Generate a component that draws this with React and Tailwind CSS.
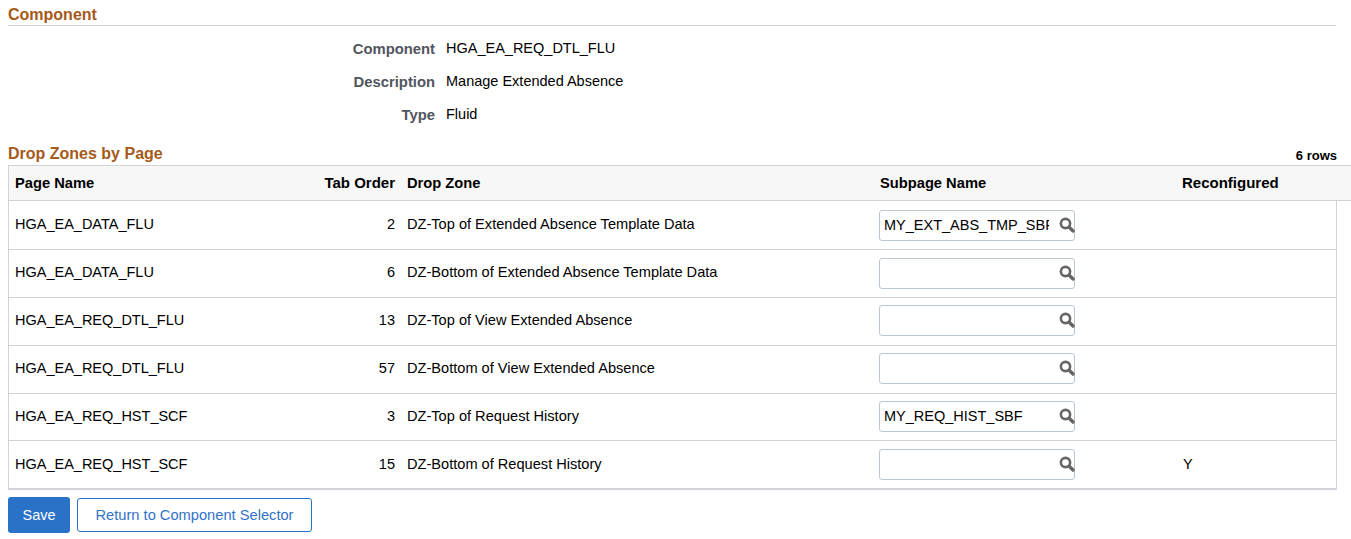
const rows = [
  { page: "HGA_EA_DATA_FLU", tab: 2, zone: "DZ-Top of Extended Absence Template Data", sub: "MY_EXT_ABS_TMP_SBF", cls: "h-[49px] border-b", top: "mt-[9px]" },
  { page: "HGA_EA_DATA_FLU", tab: 6, zone: "DZ-Bottom of Extended Absence Template Data", sub: "", cls: "h-[48px] border-b pb-[2px]", top: "mt-[8px]" },
  { page: "HGA_EA_REQ_DTL_FLU", tab: 13, zone: "DZ-Top of View Extended Absence", sub: "", cls: "h-[48px] border-b pb-[2px]", top: "mt-[7px]" },
  { page: "HGA_EA_REQ_DTL_FLU", tab: 57, zone: "DZ-Bottom of View Extended Absence", sub: "", cls: "h-[48px] border-b pb-[2px]", top: "mt-[7px]" },
  { page: "HGA_EA_REQ_HST_SCF", tab: 3, zone: "DZ-Top of Request History", sub: "MY_REQ_HIST_SBF", cls: "h-[47px] border-b", top: "mt-[7px]" },
  { page: "HGA_EA_REQ_HST_SCF", tab: 15, zone: "DZ-Bottom of Request History", sub: "", re: "Y", cls: "h-[49px] border-b-2", top: "mt-[8px]" },
];

const info = [
  ["Component", "HGA_EA_REQ_DTL_FLU"],
  ["Description", "Manage Extended Absence"],
  ["Type", "Fluid"],
];

function SearchIcon() {
  return (
    <svg width="16" height="16" viewBox="0 0 16 16" fill="none" className="absolute right-0 top-[7px]">
      <circle cx="6.5" cy="6.5" r="4.6" stroke="#666666" strokeWidth="2.6" />
      <path d="M10.2 10.2 L14 14" stroke="#666666" strokeWidth="3.4" strokeLinecap="round" />
    </svg>
  );
}

function Lookup({ value, top }) {
  return (
    <div className={`relative w-[196px] h-[31px] self-start ${top}`}>
      <input
        readOnly
        value={value}
        className="w-full h-full rounded-[3px] border border-[#bcc6d0] bg-white pl-1 pr-[25px] pb-[2px] text-[14.5px] text-black outline-none"
      />
      <SearchIcon />
    </div>
  );
}

export default function App() {
  return (
    <div className="w-[1351px] h-[539px] overflow-hidden bg-white pl-2 font-['Liberation_Sans',Arial,sans-serif] text-[14.5px] text-black">
      {/* component info */}
      <div className="w-[1328px] h-[26px] border-b border-[#d0d3da] pt-[6px] text-base leading-[18px] font-bold text-[#a5591a]">
        Component
      </div>
      <div className="flex flex-col gap-[13px] pt-[12px]">
        {info.map(([label, value]) => (
          <div key={label} className="flex h-[20px] items-start leading-[20px]">
            <div className="w-[427px] pt-px text-right text-[14.8px] font-bold text-[#51555e]">{label}</div>
            <div className="ml-[11px]">{value}</div>
          </div>
        ))}
      </div>

      {/* drop zones */}
      <div className="mt-[20px] flex h-[19px] w-[1329px] items-center justify-between">
        <span className="text-base font-bold text-[#a5591a]">Drop Zones by Page</span>
        <span className="mt-1 text-[13px] font-bold">6 rows</span>
      </div>

      <div className="mt-[2px] w-[1343px] h-[36px] border-y border-[#d0d3da] border-l bg-[#f7f7f7] flex items-center text-[14.7px] font-bold">
        <div className="w-[215px] pl-[6px]">Page Name</div>
        <div className="w-[171px] text-right text-[15px]">Tab Order</div>
        <div className="w-[485px] pl-3">Drop Zone</div>
        <div className="w-[302px]">Subpage Name</div>
        <div className="text-[15px]">Reconfigured</div>
      </div>

      <div className="w-[1329px] border-x border-[#d0d3da]">
        {rows.map((r, i) => (
          <div key={i} className={`flex items-center border-[#d0d3da] ${r.cls}`}>
            <div className="w-[215px] pl-[6px]">{r.page}</div>
            <div className="w-[171px] text-right">{r.tab}</div>
            <div className="w-[484px] pl-3 text-[14.6px]">{r.zone}</div>
            <Lookup value={r.sub} top={r.top} />
            <div className="ml-[108px]">{r.re}</div>
          </div>
        ))}
      </div>

      <div className="mt-[7px] flex items-center gap-[7px]">
        <button className="h-[36px] w-[62px] rounded-[3px] bg-[#2a72c8] pt-[2px] text-white">Save</button>
        <button className="h-[34px] w-[235px] rounded-[3px] border border-[#2a72c8] bg-white text-[14.67px] text-[#3273c8]">
          Return to Component Selector
        </button>
      </div>
    </div>
  );
}
